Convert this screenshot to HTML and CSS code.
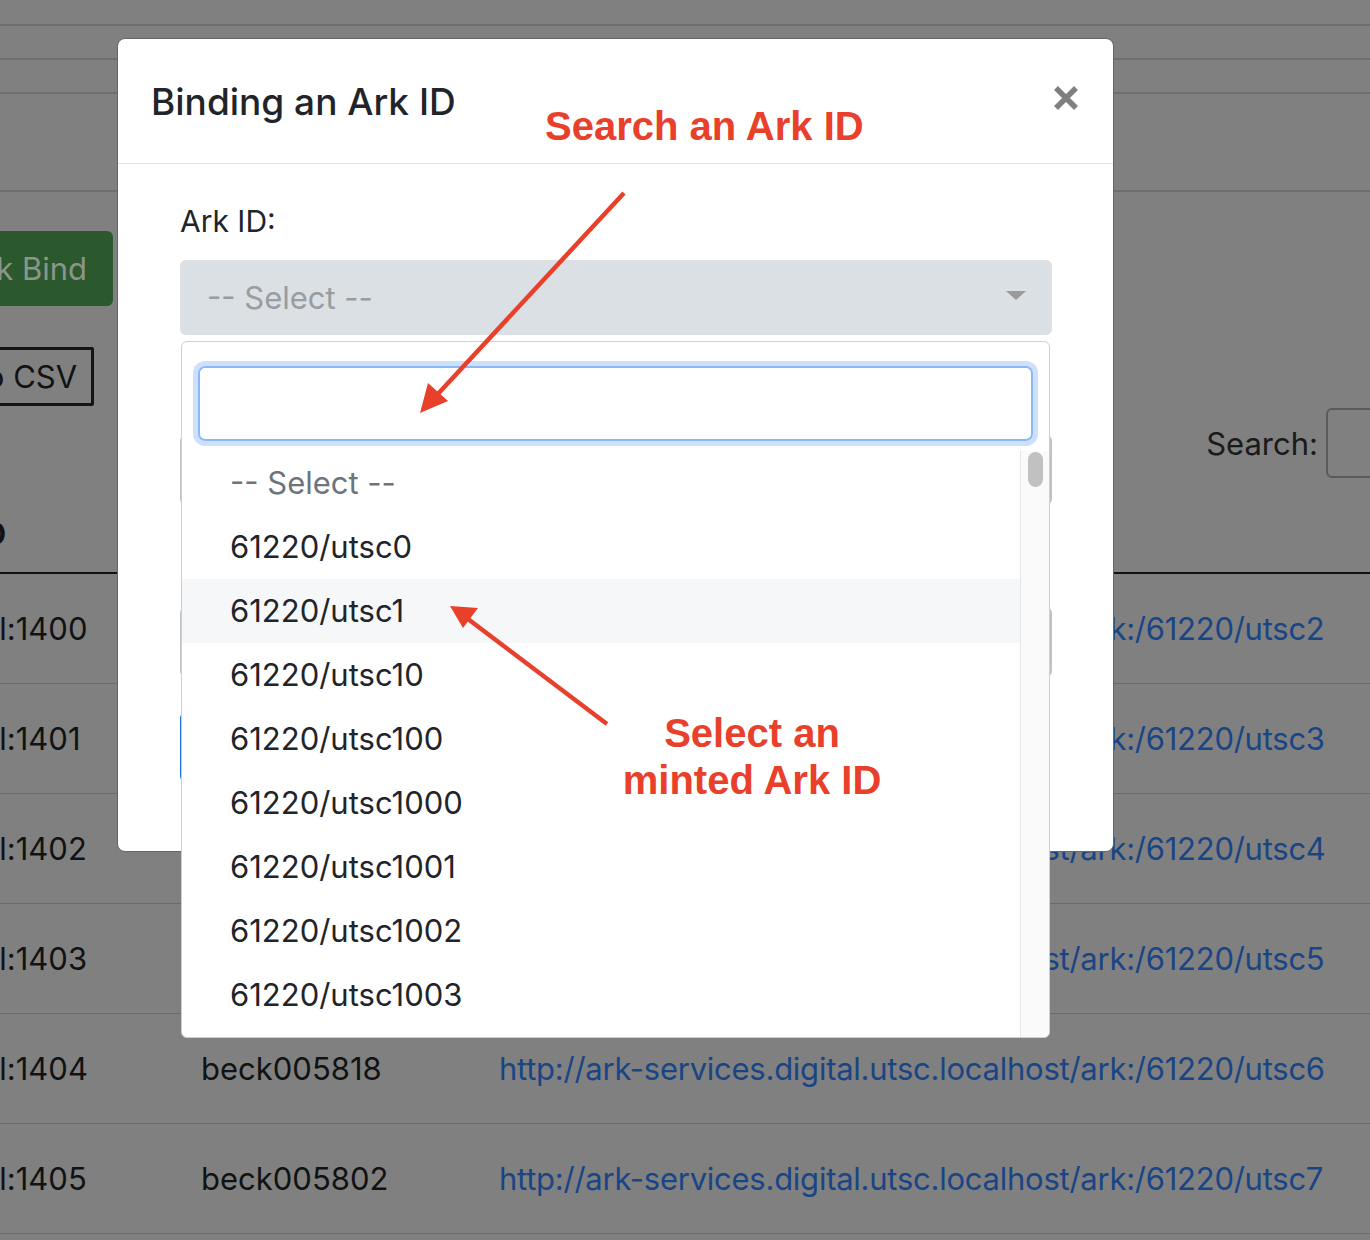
FILE: index.html
```html
<!DOCTYPE html>
<html lang="en">
<head>
<meta charset="utf-8">
<title>Binding an Ark ID</title>
<link rel="stylesheet" href="styles.css">
</head>
<body>
<div class="page">
  <div class="band b1"></div>
  <div class="band b2"></div>
  <div class="band b3"></div>
  <div class="band b4"></div>

  <div class="toolbar">
    <div class="clip-left"><button class="btn-green">Bulk Bind</button></div>
  </div>
  <div class="csv-row">
    <button class="btn-csv">to CSV</button>
  </div>
  <div class="search-row">
    <label class="search-label">Search:</label>
    <span class="search-input"></span>
  </div>

  <table class="data">
    <thead>
      <tr><th class="c1">PID</th><th class="c2">Object</th><th class="c3">Ark URL</th></tr>
    </thead>
    <tbody>
      <tr><td class="c1">col:1400</td><td class="c2">beck005801</td><td class="c3"><a>http://ark-services.digital.utsc.localhost/ark:/61220/utsc2</a></td></tr>
      <tr><td class="c1">col:1401</td><td class="c2">beck005803</td><td class="c3"><a>http://ark-services.digital.utsc.localhost/ark:/61220/utsc3</a></td></tr>
      <tr><td class="c1">col:1402</td><td class="c2">beck005810</td><td class="c3"><a>http://ark-services.digital.utsc.localhost/ark:/61220/utsc4</a></td></tr>
      <tr><td class="c1">col:1403</td><td class="c2">beck005815</td><td class="c3"><a>http://ark-services.digital.utsc.localhost/ark:/61220/utsc5</a></td></tr>
      <tr><td class="c1">col:1404</td><td class="c2">beck005818</td><td class="c3"><a>http://ark-services.digital.utsc.localhost/ark:/61220/utsc6</a></td></tr>
      <tr><td class="c1">col:1405</td><td class="c2">beck005802</td><td class="c3"><a>http://ark-services.digital.utsc.localhost/ark:/61220/utsc7</a></td></tr>
    </tbody>
  </table>
</div>

<div class="modal">
  <div class="modal-header">
    <h5 class="modal-title">Binding an Ark ID</h5>
    <span class="close" aria-label="Close">
      <svg width="26" height="26" viewBox="0 0 26 26"><path d="M3 3 L23 23 M23 3 L3 23" stroke="#7f7f7f" stroke-width="5.5" fill="none"/></svg>
    </span>
  </div>
  <div class="modal-body">
    <label class="field-label">Ark ID:</label>
    <div class="select-box">
      <span class="select-text">-- Select --</span>
      <span class="select-arrow"></span>
    </div>
    <div class="hidden-input one"></div>
    <div class="hidden-input two"></div>
    <div class="hidden-btn"></div>
  </div>
</div>

<div class="dropdown">
  <div class="dd-search"><span class="dd-field"></span></div>
  <div class="dd-results">
    <ul class="dd-list">
      <li class="placeholder">-- Select --</li>
      <li>61220/utsc0</li>
      <li class="hover">61220/utsc1</li>
      <li>61220/utsc10</li>
      <li>61220/utsc100</li>
      <li>61220/utsc1000</li>
      <li>61220/utsc1001</li>
      <li>61220/utsc1002</li>
      <li>61220/utsc1003</li>
      <li>61220/utsc1004</li>
    </ul>
    <div class="dd-scroll"><span class="dd-thumb"></span></div>
  </div>
</div>

<div class="annotations">
  <div class="note note-search">Search an Ark ID</div>
  <div class="note note-select">Select an<br>minted Ark ID</div>
  <svg class="arrows" width="1370" height="1240" viewBox="0 0 1370 1240">
    <line x1="624" y1="193" x2="436" y2="396" stroke="#e8402a" stroke-width="4.5"/>
    <polygon points="420,413 428,383 448,401" fill="#e8402a"/>
    <line x1="607" y1="724" x2="468" y2="619" stroke="#e8402a" stroke-width="4.5"/>
    <polygon points="450,606 478,608 463,628" fill="#e8402a"/>
  </svg>
</div>
</body>
</html>
```

FILE: styles.css
```css
html, body {
  margin: 0;
  padding: 0;
}
body {
  width: 1370px;
  height: 1240px;
  overflow: hidden;
  background: #808080;
  font-family: Inter, "Noto Sans", sans-serif;
  color: #111213;
  position: relative;
}
.page {
  width: 1370px;
}
.band {
  border-bottom: 2px solid #6e6e6e;
}
.b1 { height: 24px; }
.b2 { height: 32px; }
.b3 { height: 32px; }
.b4 { height: 96px; }

.toolbar {
  margin-top: 39px;
  height: 75px;
}
.clip-left {
  width: 113px;
  height: 75px;
  overflow: hidden;
  display: flex;
  justify-content: flex-end;
}
.btn-green {
  flex: none;
  height: 75px;
  border: none;
  border-radius: 6px;
  background: #2b582d;
  color: #8a968a;
  font-family: inherit;
  font-size: 31px;
  padding: 0 26px 0 26px;
  white-space: nowrap;
}
.csv-row {
  margin-top: 41px;
  height: 59px;
}
.btn-csv {
  height: 59px;
  margin-left: -41px;
  border: 3px solid #141414;
  background: transparent;
  color: #111213;
  font-family: inherit;
  font-size: 31px;
  padding: 0 14px;
  border-radius: 2px;
}
.search-row {
  margin-top: 2px;
  height: 70px;
  display: flex;
  justify-content: flex-end;
  align-items: center;
  gap: 8px;
  margin-right: -60px;
}
.search-label {
  font-size: 31px;
  color: #1a1a1a;
}
.search-input {
  width: 100px;
  height: 66px;
  border: 2px solid #5a5a5a;
  border-radius: 6px;
}

.data {
  border-collapse: collapse;
  margin-left: -37px;
  width: 1407px;
  font-size: 31px;
  white-space: nowrap;
}
.data th {
  height: 74px;
  vertical-align: bottom;
  text-align: left;
  padding: 0 0 20px 0;
  border-bottom: 2px solid #111;
  font-weight: 700;
}
.data th.c1 {
  text-indent: -8px;
}
.data td {
  height: 109px;
  padding: 0;
  border-bottom: 1px solid #6a6a6a;
  vertical-align: middle;
}
.data .c1 { width: 238px; }
.data .c2 { width: 298px; }
.data a {
  color: #1a4585;
  text-decoration: none;
  letter-spacing: -0.25px;
}

/* modal */
.modal {
  position: absolute;
  left: 117px;
  top: 38px;
  width: 995px;
  height: 812px;
  background: #fff;
  border: 1px solid #666;
  border-radius: 8px;
  overflow: hidden;
}
.modal-header {
  height: 124px;
  border-bottom: 1px solid #dee2e6;
  display: flex;
  align-items: center;
  justify-content: space-between;
  padding: 0 34px 0 33px;
}
.modal-title {
  margin: 0;
  font-size: 37px;
  font-weight: 500;
  color: #212529;
}
.close {
  display: flex;
  margin-top: -6px;
}
.modal-body {
  padding: 38px 61px 0 62px;
}
.field-label {
  display: block;
  font-size: 30px;
  color: #212529;
  line-height: 38px;
}
.select-box {
  margin-top: 20px;
  height: 75px;
  background: #dbe0e4;
  border-radius: 6px;
  display: flex;
  align-items: center;
  justify-content: space-between;
  padding: 0 26px 0 27px;
}
.select-text {
  font-size: 31px;
  color: #999ca0;
}
.select-arrow {
  width: 0;
  height: 0;
  border-top: 9px solid #9a9a9a;
  border-left: 10px solid transparent;
  border-right: 10px solid transparent;
  margin-top: -4px;
}
.hidden-input {
  height: 66px;
  border: 2px solid #bfc3c7;
  border-radius: 6px;
}
.hidden-input.one { margin-top: 100px; }
.hidden-input.two { margin-top: 102px; }
.hidden-btn {
  margin-top: 35px;
  width: 200px;
  height: 70px;
  background: #1f6fe0;
  border-radius: 6px;
}

/* dropdown */
.dropdown {
  position: absolute;
  left: 181px;
  top: 341px;
  width: 867px;
  height: 695px;
  background: #fff;
  border: 1px solid #cfcfcf;
  border-radius: 6px;
  overflow: hidden;
  display: flex;
  flex-direction: column;
}
.dd-search {
  padding: 24px 16px 10px 16px;
}
.dd-field {
  display: block;
  height: 71px;
  border: 2px solid #8ab8f8;
  border-radius: 7px;
  box-shadow: 0 0 0 5px #cde1fd;
}
.dd-results {
  flex: 1;
  display: flex;
  min-height: 0;
}
.dd-list {
  flex: 1;
  list-style: none;
  margin: 0;
  padding: 0;
  overflow: hidden;
}
.dd-list li {
  height: 64px;
  line-height: 64px;
  padding-left: 48px;
  font-size: 31px;
  color: #212529;
}
.dd-list li.placeholder {
  color: #6c757d;
}
.dd-list li.hover {
  background: #f6f7f9;
}
.dd-scroll {
  width: 28px;
  background: #fafafa;
  border-left: 1px solid #e6e6e6;
  padding-top: 1px;
  display: flex;
  justify-content: center;
}
.dd-thumb {
  display: block;
  width: 15px;
  height: 35px;
  border-radius: 8px;
  background: #c1c1c1;
}

/* annotations */
.annotations {
  position: absolute;
  left: 0;
  top: 0;
  width: 1370px;
  height: 1240px;
  pointer-events: none;
}
.arrows {
  position: absolute;
  left: 0;
  top: 0;
}
.note {
  position: absolute;
  font-family: "Liberation Sans", Arial, sans-serif;
  font-weight: 700;
  color: #e8402a;
  font-size: 40px;
  line-height: 47px;
}
.note-search {
  left: 545px;
  top: 103px;
}
.note-select {
  left: 592px;
  width: 320px;
  top: 710px;
  text-align: center;
}
```
